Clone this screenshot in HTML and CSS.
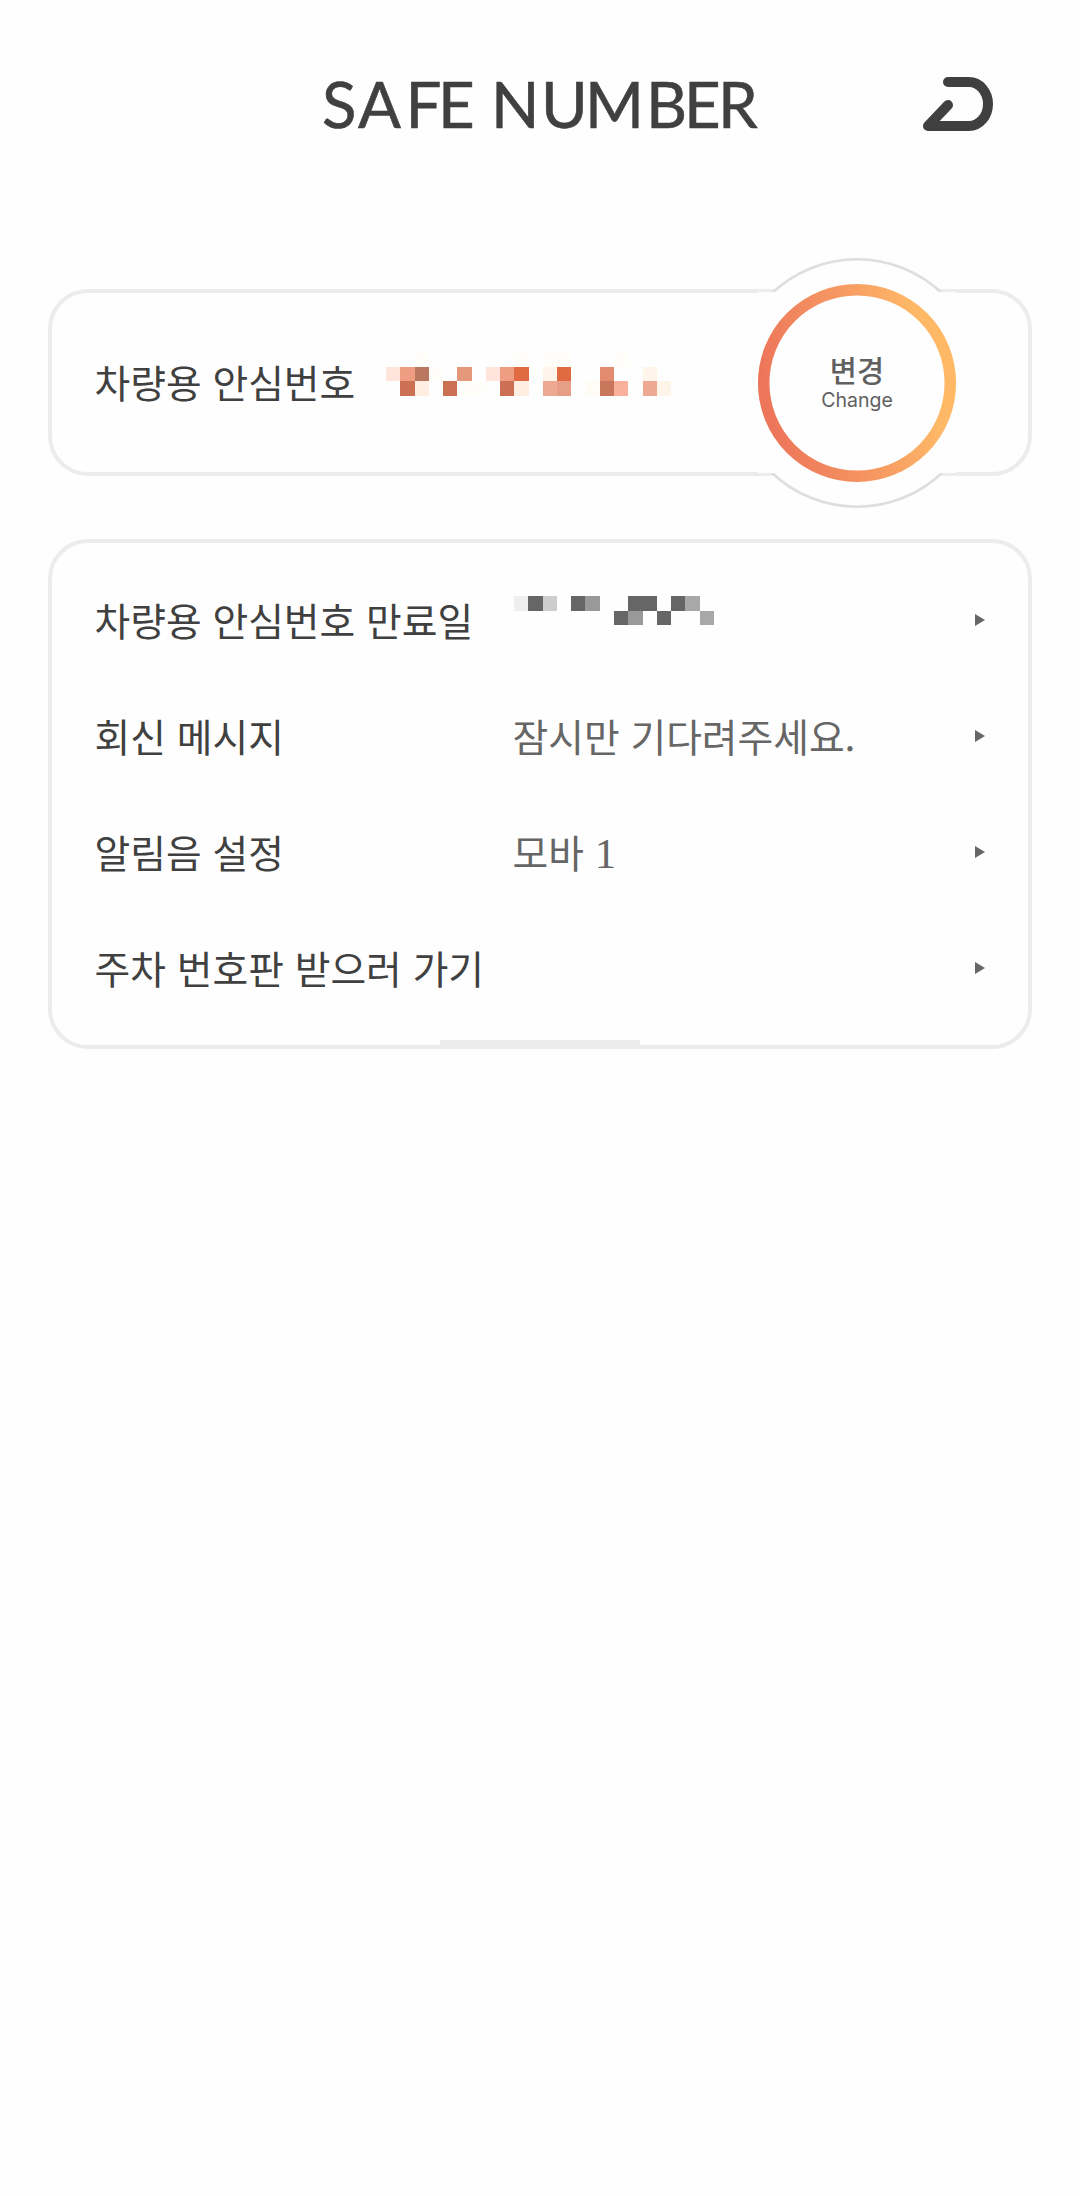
FILE: index.html
```html
<!DOCTYPE html>
<html lang="ko">
<head>
<meta charset="utf-8">
<title>SAFE NUMBER</title>
<link rel="stylesheet" href="styles.css">
</head>
<body>
<header class="header">
  <svg class="title" width="460" height="104" viewBox="310 52 460 104" role="heading" aria-level="1">
    <text y="127.7" x="322 358 405.500 438 470 491 541 585 646 684 718">SAFE NUMBER</text>
  </svg>
  <svg class="logo" width="70" height="54" viewBox="0 0 70 54">
    <path d="M25 5H46A19 22 0 0 1 46 49H5L25 28"/>
  </svg>
</header>
<main class="content">
  <section class="card number-card">
    <span class="label">차량용 안심번호</span>
    <svg class="mosaic" width="285" height="44" viewBox="0 0 20 3" preserveAspectRatio="none" shape-rendering="crispEdges">
      <path fill="#fffdf9" d="M2 0h1v1h-1zM9 0h1v1h-1zM16 0h1v1h-1zM3 1h1v1h-1zM5 2h2v1h-2zM11 0h2v1h-2z"/>
      <path fill="#ffe5dc" d="M0 1h1v1h-1zM7 1h1v1h-1z"/>
      <path fill="#ee9c82" d="M1 1h1v1h-1zM8 1h1v1h-1z"/>
      <path fill="#bb7860" d="M2 1h1v1h-1z"/>
      <path fill="#e5977b" d="M5 1h1v1h-1z"/>
      <path fill="#e06b43" d="M9 1h1v1h-1zM12 1h1v1h-1z"/>
      <path fill="#fff5eb" d="M11 1h1v1h-1zM18 1h1v1h-1z"/>
      <path fill="#e28b6e" d="M15 1h1v1h-1z"/>
      <path fill="#cb7052" d="M1 2h1v1h-1zM4 2h1v1h-1zM8 2h1v1h-1z"/>
      <path fill="#ffeee1" d="M2 2h1v1h-1zM9 2h1v1h-1z"/>
      <path fill="#eea993" d="M11 2h1v1h-1zM18 2h1v1h-1z"/>
      <path fill="#e69e86" d="M12 2h1v1h-1z"/>
      <path fill="#fffbf5" d="M14 2h1v1h-1z"/>
      <path fill="#c8775d" d="M15 2h1v1h-1z"/>
      <path fill="#fab19b" d="M16 2h1v1h-1z"/>
      <path fill="#fff4e8" d="M19 2h1v1h-1z"/>
    </svg>
    <button class="change" type="button">
      <svg class="ring" width="250" height="250" viewBox="0 0 250 250">
        <defs>
          <linearGradient id="warm" gradientUnits="userSpaceOnUse" x1="26" y1="145" x2="224" y2="105">
            <stop offset="0.050" stop-color="#ed765a"/>
            <stop offset="0.500" stop-color="#f69862"/>
            <stop offset="0.850" stop-color="#feb866"/>
          </linearGradient>
        </defs>
        <circle cx="125" cy="125" r="123.700" fill="#fefefe" stroke="#dedede" stroke-width="2.600"/>
        <path fill="#fefefe" d="M0 36H26V34H224V36H250V213H224V215H26V213H0z"/>
        <circle cx="125" cy="125" r="93.300" fill="none" stroke="url(#warm)" stroke-width="11.500"/>
      </svg>
      <span class="change-ko">변경</span>
      <span class="change-en">Change</span>
    </button>
  </section>
  <section class="card list-card">
    <div class="row">
      <span class="label">차량용 안심번호 만료일</span>
      <span class="value mosaic-value"><svg class="date-mosaic" width="200" height="29" viewBox="0 0 14 2" preserveAspectRatio="none" shape-rendering="crispEdges">
        <path fill="#efefef" d="M0 0h1v1h-1z"/>
        <path fill="#666" d="M1 0h1v1h-1zM4 0h1v1h-1zM8 0h2v1h-2zM11 0h1v1h-1zM7 1h1v1h-1zM10 1h1v1h-1z"/>
        <path fill="#cdcdcd" d="M2 0h1v1h-1z"/>
        <path fill="#999" d="M5 0h1v1h-1zM8 1h1v1h-1z"/>
        <path fill="#a8a8a8" d="M12 0h1v1h-1zM13 1h1v1h-1z"/>
      </svg></span>
      <svg class="arrow" width="10" height="12" viewBox="0 0 10 12"><path d="M0 0L10 6L0 12z"/></svg>
    </div>
    <div class="row">
      <span class="label">회신 메시지</span>
      <span class="value">잠시만 기다려주세요.</span>
      <svg class="arrow" width="10" height="12" viewBox="0 0 10 12"><path d="M0 0L10 6L0 12z"/></svg>
    </div>
    <div class="row">
      <span class="label">알림음 설정</span>
      <span class="value">모바 <span class="digit">1</span></span>
      <svg class="arrow" width="10" height="12" viewBox="0 0 10 12"><path d="M0 0L10 6L0 12z"/></svg>
    </div>
    <div class="row">
      <span class="label">주차 번호판 받으러 가기</span>
      <span class="value"></span>
      <svg class="arrow" width="10" height="12" viewBox="0 0 10 12"><path d="M0 0L10 6L0 12z"/></svg>
    </div>
    <div class="handle"></div>
  </section>
</main>
</body>
</html>
```
FILE: styles.css
```css
* { box-sizing: border-box; }
body {
  margin: 0;
  min-height: 2196px;
  background: #fefefe;
  color: #404040;
  font-family: "Noto Sans CJK KR", sans-serif;
}
.header {
  display: grid;
  grid-template-columns: 1fr 460px 1fr;
  height: 289px;
  padding: 52px 87px 0;
  align-items: start;
}
.title { grid-column: 2; }
.title text {
  font-family: Lato, sans-serif;
  font-size: 63.5px;
  font-weight: 400;
  fill: #404040;
  stroke: #404040;
  stroke-width: 0.6px;
}
.logo {
  justify-self: end;
  margin-top: 25px;
  fill: none;
  stroke: #404040;
  stroke-width: 10px;
  stroke-linecap: round;
  stroke-linejoin: round;
}
.content {
  display: flex;
  flex-direction: column;
  gap: 63px;
  padding: 0 48px;
}
.card {
  position: relative;
  border: 4px solid #ececec;
  border-radius: 40px;
}
.number-card {
  display: flex;
  align-items: center;
  height: 187px;
  padding-left: 42.5px;
}
.label {
  font-size: 38.8px;
  line-height: 56px;
  padding-bottom: 2px;
  white-space: nowrap;
}
.number-card .label {
  width: 291.5px;
  padding-bottom: 4px;
}
.mosaic { margin-top: -18px; }
.change {
  position: absolute;
  left: 680px;
  top: -35px;
  width: 250px;
  height: 250px;
  padding: 92px 0 0;
  border: 0;
  background: none;
  display: flex;
  flex-direction: column;
  align-items: center;
  color: #606060;
}
.ring {
  position: absolute;
  left: 0;
  top: 0;
}
.change-ko, .change-en { position: relative; }
.change-ko {
  font: 500 29.5px/38px "Noto Sans CJK KR", sans-serif;
}
.change-en {
  font: 400 19.5px/24px Inter, sans-serif;
}
.list-card {
  height: 510px;
  padding: 19px 43px 19px 42.5px;
}
.row {
  display: grid;
  grid-template-columns: 418px 1fr 10px;
  align-items: center;
  height: 116px;
}
.value {
  color: #666;
  font-size: 38.8px;
  line-height: 56px;
  padding-bottom: 2px;
  white-space: nowrap;
}
.mosaic-value { padding: 0 0 0 1.5px; }
.digit {
  font-family: "Liberation Serif", serif;
  font-size: 43px;
  line-height: 1;
}
.date-mosaic {
  display: block;
  margin-top: -19px;
}
.arrow { fill: #666; }
.handle {
  position: absolute;
  left: 388px;
  bottom: -3px;
  width: 200px;
  height: 8px;
  background: #ececec;
}
```
